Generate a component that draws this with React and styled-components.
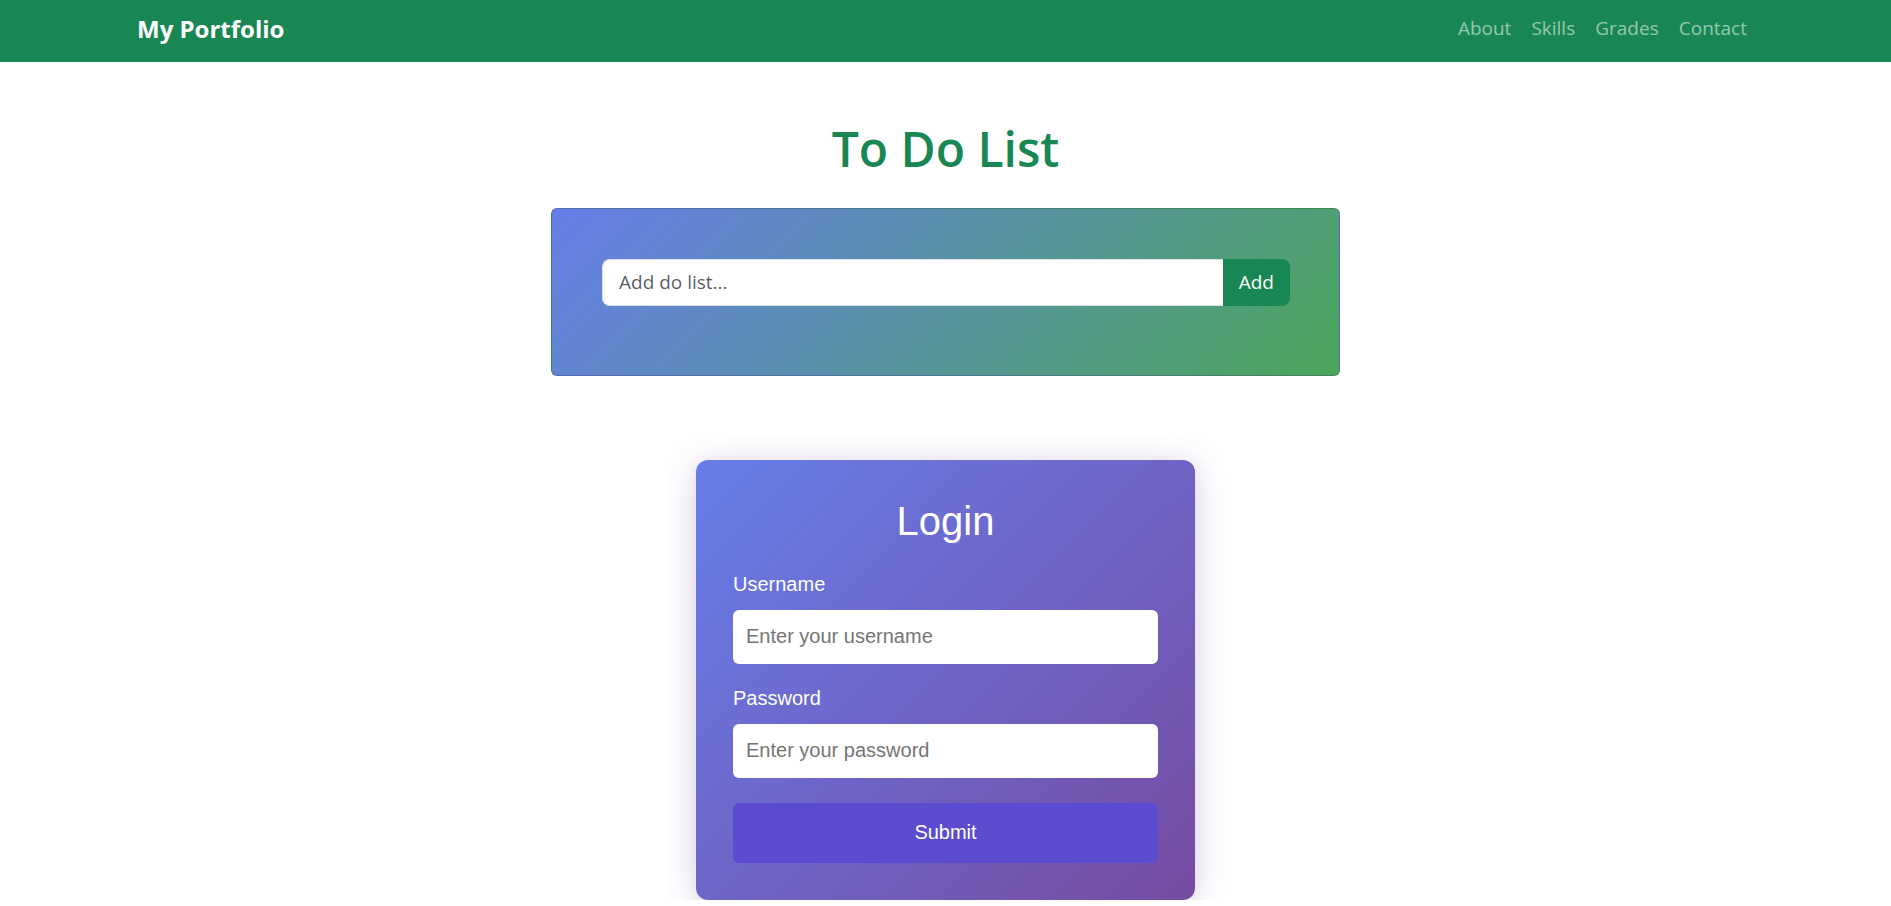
import React from "react";
import styled, { createGlobalStyle } from "styled-components";

const GlobalStyle = createGlobalStyle`
  * { box-sizing: border-box; }
  body {
    margin: 0;
    background: #ffffff;
    font-family: "Open Sans", "Noto Sans", sans-serif;
    color: #212529;
  }
`;

const NavBar = styled.nav`
  height: 62px;
  background: #198754;
  display: flex;
  align-items: center;
  justify-content: space-between;
  padding: 0 134px 5px 137px;
`;

const Brand = styled.a`
  color: #ffffff;
  font-size: 24px;
  font-weight: 700;
  text-decoration: none;
  line-height: 1;
`;

const NavList = styled.ul`
  display: flex;
  list-style: none;
  margin: 0;
  padding: 0;
`;

const NavLink = styled.a`
  display: block;
  padding: 0 10px;
  font-size: 19px;
  line-height: 1;
  color: rgba(255, 255, 255, 0.55);
  text-decoration: none;
`;

const Main = styled.main`
  display: flex;
  flex-direction: column;
  align-items: center;
  padding-top: 58px;
`;

const Title = styled.h1`
  margin: 0 0 30px;
  font-size: 48px;
  line-height: 1.2;
  font-weight: 600;
  color: #198754;
  text-align: center;
`;

const TodoCard = styled.section`
  width: 789px;
  padding: 50px 49px 69px 50px;
  border: 1px solid rgba(0, 0, 0, 0.175);
  border-radius: 6px;
  background: linear-gradient(135deg, #667eea, #4aa65a);
`;

const InputGroup = styled.div`
  display: flex;
  height: 47px;
`;

const TodoInput = styled.input`
  flex: 1;
  min-width: 0;
  height: 100%;
  padding: 0 16px;
  font-family: "Open Sans", "Noto Sans", sans-serif;
  font-size: 19px;
  color: #212529;
  background: #ffffff;
  border: 1px solid #dee2e6;
  border-right: none;
  border-radius: 8px 0 0 8px;
  outline: none;
  &::placeholder { color: rgba(33, 37, 41, 0.75); }
`;

const AddButton = styled.button`
  height: 100%;
  padding: 0 16px;
  font-family: "Open Sans", "Noto Sans", sans-serif;
  font-size: 19px;
  color: #ffffff;
  background: #198754;
  border: none;
  border-radius: 0 8px 8px 0;
  cursor: pointer;
`;

const LoginCard = styled.form`
  width: 499px;
  margin-top: 84px;
  padding: 38px 37px 37px;
  border-radius: 12px;
  background: linear-gradient(135deg, #667eea, #764ba2);
  box-shadow: 0 4px 30px rgba(118, 75, 162, 0.3);
  font-family: "Liberation Sans", Arial, sans-serif;
  color: #ffffff;
  display: flex;
  flex-direction: column;
`;

const LoginTitle = styled.h2`
  margin: 0 0 29px;
  font-size: 40px;
  line-height: 46px;
  font-weight: 400;
  text-align: center;
`;

const Field = styled.div`
  display: flex;
  flex-direction: column;
  margin-bottom: ${(p) => p.$gap}px;
`;

const Label = styled.label`
  font-size: 20px;
  line-height: 23px;
  margin-bottom: 14px;
`;

const LoginInput = styled.input`
  height: 54px;
  padding: 0 13px;
  font-family: "Liberation Sans", Arial, sans-serif;
  font-size: 20px;
  color: #212529;
  background: #ffffff;
  border: none;
  border-radius: 6px;
  outline: none;
  &::placeholder { color: #757575; }
`;

const SubmitButton = styled.button`
  height: 60px;
  font-family: "Liberation Sans", Arial, sans-serif;
  font-size: 20px;
  color: #ffffff;
  background: #5a4bcf;
  border: none;
  border-radius: 6px;
  cursor: pointer;
`;

export default function App() {
  return (
    <>
      <GlobalStyle />
      <NavBar>
        <Brand href="#">My Portfolio</Brand>
        <NavList>
          {["About", "Skills", "Grades", "Contact"].map((l) => (
            <li key={l}>
              <NavLink href="#">{l}</NavLink>
            </li>
          ))}
        </NavList>
      </NavBar>
      <Main>
        <Title>To Do List</Title>
        <TodoCard>
          <InputGroup>
            <TodoInput placeholder="Add do list..." />
            <AddButton type="button">Add</AddButton>
          </InputGroup>
        </TodoCard>
        <LoginCard onSubmit={(e) => e.preventDefault()}>
          <LoginTitle>Login</LoginTitle>
          <Field $gap={23}>
            <Label>Username</Label>
            <LoginInput placeholder="Enter your username" />
          </Field>
          <Field $gap={25}>
            <Label>Password</Label>
            <LoginInput type="password" placeholder="Enter your password" />
          </Field>
          <SubmitButton type="submit">Submit</SubmitButton>
        </LoginCard>
      </Main>
    </>
  );
}
